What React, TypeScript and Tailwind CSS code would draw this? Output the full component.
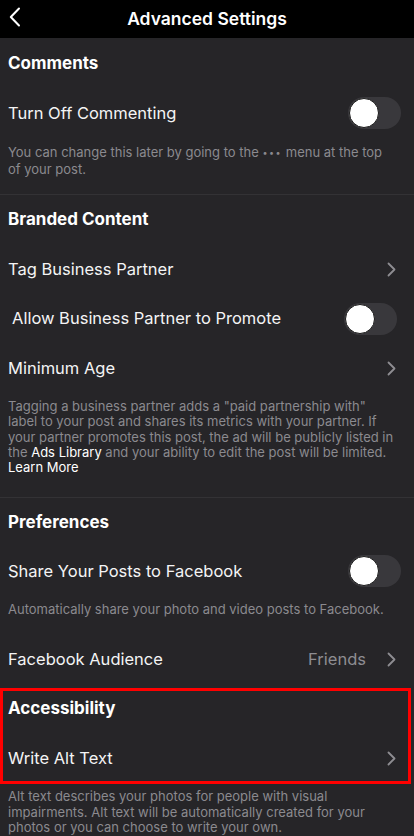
import React from "react";

function Chevron() {
  return (
    <svg width="9" height="15" viewBox="0 0 9 15" fill="none" className="shrink-0">
      <path d="M1.5 1.5L7.5 7.5L1.5 13.5" stroke="#8e8d92" strokeWidth="1.8" strokeLinecap="round" strokeLinejoin="round" />
    </svg>
  );
}

function Toggle() {
  return (
    <div className="flex h-[32px] w-[53px] shrink-0 items-center rounded-full bg-[#39383c] p-px">
      <div className="h-[30px] w-[30px] rounded-full border border-[#1a1a1a] bg-white" />
    </div>
  );
}

function SectionTitle({ title, className }: { title: string; className: string }) {
  return (
    <div className={`flex items-center px-2 text-[17px] font-bold text-white ${className}`}>{title}</div>
  );
}

function Row({
  label,
  right,
  className = "",
}: {
  label: string;
  right: React.ReactNode;
  className?: string;
}) {
  return (
    <div className={`flex items-center justify-between ${className}`}>
      <span className="text-[16.5px] text-[#f4f4f5]">{label}</span>
      {right}
    </div>
  );
}

function Note({ children, className }: { children: React.ReactNode; className: string }) {
  return <p className={`px-2 text-[13px] text-[#8b8a8f] ${className}`}>{children}</p>;
}

export default function App() {
  return (
    <div className="flex min-h-[836px] w-[414px] flex-col bg-[#262528] font-['Inter','Liberation_Sans',sans-serif] antialiased">
      <header className="relative flex h-[38px] items-center justify-center bg-black">
        <svg
          width="12"
          height="20"
          viewBox="0 0 12 20"
          fill="none"
          className="absolute left-[9px] top-[7px]"
        >
          <path d="M10 1.5L1.8 10L10 18.5" stroke="white" strokeWidth="2" strokeLinecap="round" strokeLinejoin="round" />
        </svg>
        <h1 className="text-[17.5px] font-semibold text-white">Advanced Settings</h1>
      </header>

      <section className="border-b border-[#333235]">
        <SectionTitle title="Comments" className="h-[52px]" />
        <Row label="Turn Off Commenting" right={<Toggle />} className="h-[46px] pl-2 pr-[13px]" />
        <Note className="pb-[17px] pt-2 leading-[16px]">
          You can change this later by going to the{" "}
          <span className="text-[9px] tracking-[1.5px] align-[1px]">•••</span> menu at the top
          <br />
          of your post.
        </Note>
      </section>

      <section className="border-b border-[#333235]">
        <SectionTitle title="Branded Content" className="h-[49px]" />
        <Row label="Tag Business Partner" right={<Chevron />} className="h-[50px] pl-2 pr-[18px]" />
        <Row
          label="Allow Business Partner to Promote"
          right={<Toggle />}
          className="h-[49px] pl-[12px] pr-[17px]"
        />
        <Row label="Minimum Age" right={<Chevron />} className="h-[50px] pl-2 pr-[18px]" />
        <Note className="pb-[22px] pt-[6px] leading-[15.25px]">
          Tagging a business partner adds a "paid partnership with"
          <br />
          label to your post and shares its metrics with your partner. If
          <br />
          your partner promotes this post, the ad will be publicly listed in
          <br />
          the <span className="text-white">Ads Library</span> and your ability to edit the post will be limited.
          <br />
          <span className="text-white">Learn More</span>
        </Note>
      </section>

      <section>
        <SectionTitle title="Preferences" className="h-[48px]" />
        <Row label="Share Your Posts to Facebook" right={<Toggle />} className="h-[50px] pl-2 pr-[13px]" />
        <Note className="pb-[17px] pt-[5px] leading-[16px]">
          Automatically share your photo and video posts to Facebook.
        </Note>
        <Row
          label="Facebook Audience"
          right={
            <div className="flex items-center gap-[21px]">
              <span className="text-[16.5px] text-[#8e8d92]">Friends</span>
              <Chevron />
            </div>
          }
          className="h-[50px] pl-2 pr-[18px]"
        />
      </section>

      <section className="mr-[3px] mt-1 border-[3px] border-[#ff0000]">
        <div className="flex h-[34px] items-center px-[5px] text-[17px] font-bold text-white">Accessibility</div>
        <div className="flex h-[56px] items-center justify-between pl-[5px] pr-[12px] pt-[10px]">
          <span className="text-[16.5px] text-[#f4f4f5]">Write Alt Text</span>
          <Chevron />
        </div>
      </section>
      <Note className="pt-[5px] leading-[15.5px]">
        Alt text describes your photos for people with visual
        <br />
        impairments. Alt text will be automatically created for your
        <br />
        photos or you can choose to write your own.
      </Note>
    </div>
  );
}
